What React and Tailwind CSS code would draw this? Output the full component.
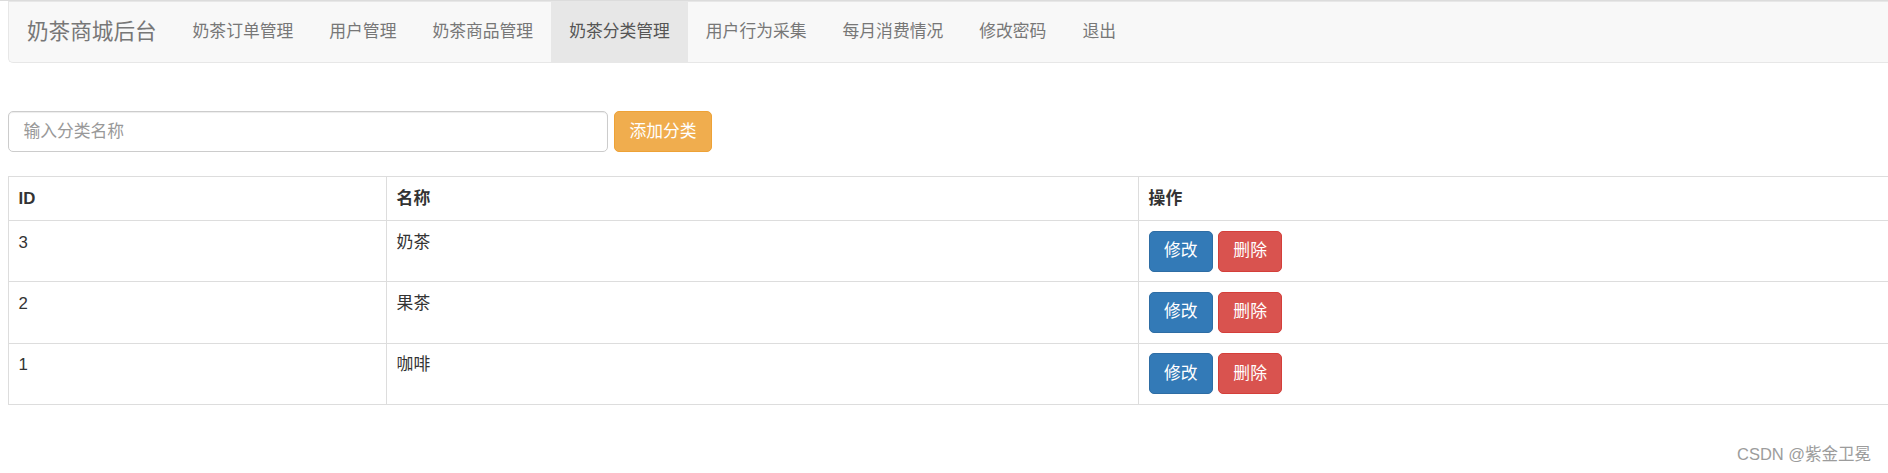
import React from "react"

const navItems = ["奶茶订单管理", "用户管理", "奶茶商品管理", "奶茶分类管理", "用户行为采集", "每月消费情况", "修改密码", "退出"]

const rows = [
    { id: 3, name: "奶茶" },
    { id: 2, name: "果茶" },
    { id: 1, name: "咖啡" },
]

const App = () => {
    return (
        <div className="relative min-h-[473px] w-full overflow-hidden bg-white text-[#333] font-['Liberation_Sans','Noto_Sans_CJK_SC',sans-serif]">
            <div className="h-px bg-[#dcdcdc]" />

            <nav className="ml-[8px] flex h-[62px] items-stretch rounded-bl-[5px] border border-r-0 border-[#e7e7e7] bg-[#f8f8f8]">
                <a className="flex items-center px-[18px] text-[21.6px] leading-[24px] text-[#777]">
                    奶茶商城后台
                </a>
                <ul className="flex">
                    {navItems.map((item) => (
                        <li key={item} className="flex">
                            <a
                                className={
                                    item === "奶茶分类管理"
                                        ? "flex items-center bg-[#e7e7e7] px-[18px] text-[16.8px] leading-[24px] text-[#555]"
                                        : "flex items-center px-[18px] text-[16.8px] leading-[24px] text-[#777]"
                                }
                            >
                                {item}
                            </a>
                        </li>
                    ))}
                </ul>
            </nav>

            <div className="ml-[8px] mt-[48px] flex items-center gap-[6px]">
                <input
                    type="text"
                    placeholder="输入分类名称"
                    className="h-[41px] w-[600px] rounded-[5px] border border-[#ccc] px-[14.4px] text-[16.8px] text-[#555] shadow-[inset_0_1px_1px_rgba(0,0,0,0.075)] outline-none placeholder:text-[#999]"
                />
                <button className="h-[41px] rounded-[5px] border border-[#eea236] bg-[#f0ad4e] px-[14.4px] text-[16.8px] leading-[24px] text-white">
                    添加分类
                </button>
            </div>

            <table className="ml-[8px] mt-[24px] w-[1920px] table-fixed border-collapse border border-[#ddd] text-[16.8px]">
                <colgroup>
                    <col className="w-[378px]" />
                    <col className="w-[752px]" />
                    <col />
                </colgroup>
                <thead>
                    <tr>
                        <th className="border border-[#ddd] p-[9.6px] text-left font-bold leading-[24px]">ID</th>
                        <th className="border border-[#ddd] p-[9.6px] text-left font-bold leading-[24px]">名称</th>
                        <th className="border border-[#ddd] p-[9.6px] text-left font-bold leading-[24px]">操作</th>
                    </tr>
                </thead>
                <tbody>
                    {rows.map((row) => (
                        <tr key={row.id}>
                            <td className="border border-[#ddd] p-[9.6px] align-top leading-[24px]">{row.id}</td>
                            <td className="border border-[#ddd] p-[9.6px] align-top leading-[24px]">{row.name}</td>
                            <td className="border border-[#ddd] p-[9.6px] align-top leading-[24px]">
                                <div className="flex gap-[5px]">
                                    <button className="h-[41px] rounded-[5px] border border-[#2e6da4] bg-[#337ab7] px-[14.4px] text-[16.8px] leading-[24px] text-white">
                                        修改
                                    </button>
                                    <button className="h-[41px] rounded-[5px] border border-[#d43f3a] bg-[#d9534f] px-[14.4px] text-[16.8px] leading-[24px] text-white">
                                        删除
                                    </button>
                                </div>
                            </td>
                        </tr>
                    ))}
                </tbody>
            </table>

            <span className="absolute left-[1737px] top-[443px] text-[16.5px] leading-[22px] text-[#9c9c9c]">
                CSDN @紫金卫冕
            </span>
        </div>
    )
}

export default App
